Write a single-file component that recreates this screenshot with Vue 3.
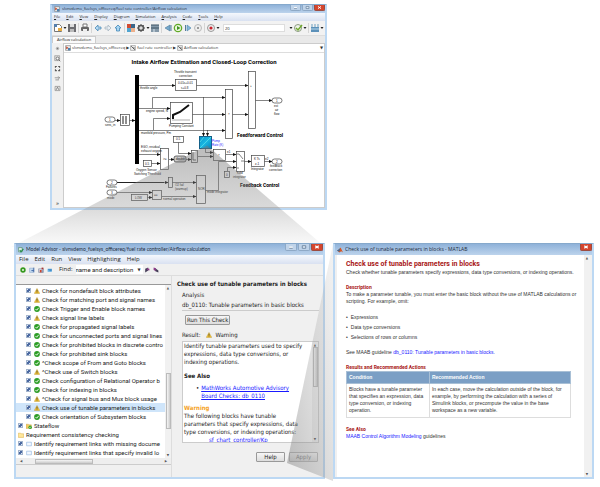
<script setup>
import { ref } from 'vue'

const modelMenus = ['File', 'Edit', 'View', 'Display', 'Diagram', 'Simulation', 'Analysis', 'Code', 'Tools', 'Help']
const modelTools = ['new', 'caret', 'save', 'sep', 'print', 'sep', 'back', 'forward', 'up', 'sep', 'library', 'gear', 'caret', 'explorer', 'sep', 'stepback', 'run', 'stepfwd', 'stop', 'sep', 'record', 'caret']
const sideTools = ['dot', 'lens', 'fit', 'route', 'note']
const crumbs = ['slvnvdemo_fuelsys_officereq', 'fuel rate controller', 'Airflow calculation']
const stopTime = ref('20')

const advisorMenus = ['File', 'Edit', 'Run', 'View', 'Highlighting', 'Help']
const advisorTools = ['ring', 'report', 'reportred', 'bluedoc']
const checks = [
  ['warn', 'Check for nondefault block attributes'],
  ['warn', 'Check for matching port and signal names'],
  ['pass', 'Check Trigger and Enable block names'],
  ['warn', 'Check signal line labels'],
  ['pass', 'Check for propagated signal labels'],
  ['pass', 'Check for unconnected ports and signal lines'],
  ['pass', 'Check for prohibited blocks in discrete contro'],
  ['pass', 'Check for prohibited sink blocks'],
  ['pass', '^Check scope of From and Goto blocks'],
  ['warn', '^Check use of Switch blocks'],
  ['pass', 'Check configuration of Relational Operator b'],
  ['pass', 'Check for indexing in blocks'],
  ['warn', '^Check for signal bus and Mux block usage'],
  ['warn', 'Check use of tunable parameters in blocks'],
  ['pass', 'Check orientation of Subsystem blocks'],
].map(([icon, text]) => ({ icon, text, level: 2, box: true }))
const tree = ref([
  ...checks,
  { icon: 'flow', text: 'Stateflow', level: 1, box: true },
  { icon: 'folder', text: 'Requirement consistency checking', level: 1, box: false },
  { icon: 'page', text: 'Identify requirement links with missing docume', level: 1, box: true },
  { icon: 'page', text: 'Identify requirement links that specify invalid lo', level: 1, box: true },
].map((row) => ({ ...row, checked: row.box })))
const selected = 13

const wires = [
  'M138 85.500H174', 'M195 85.500H247', 'M138 108.500H169', 'M151.500 108V97.500H224', 'M191 114.500H224',
  'M138 130.500H224', 'M152.500 130V118.500H169', 'M231 114.500H247', 'M254 100.500H271', 'M202.500 97V136',
  'M206.500 130V136', 'M114 120.500H119', 'M128 120.500H134', 'M138 154.500H159', 'M150 163.500H159',
  'M168 159.500H173', 'M177.500 142V153.500H190', 'M185 159.500H190', 'M197 156.500H212', 'M204.500 148V152.500H212',
  'M225 154.500H235', 'M243 161.500H250', 'M263 161.500H271', 'M226.500 171V167.500H235', 'M204 190.500H217.500V161.500H235',
  'M115 182.500H167', 'M171 182.500H195', 'M115 192.500H151', 'M146 197.500H151', 'M161 196.500H195',
]
const blocks = [
  [174, 79, 21, 11], [247, 71, 7, 57], [224, 89, 7, 49], [169, 102, 22, 21], [119, 114, 9, 11],
  [159, 148, 8, 21], [142, 160, 8, 6], [172, 136, 10, 6], [190, 150, 6, 12],
  [212, 149, 12, 11], [235, 151, 8, 20], [250, 155, 13, 11], [223, 171, 5, 6], [195, 175, 9, 28],
  [167, 177, 4, 10], [130, 194, 16, 6], [151, 190, 9, 9],
]
const ports = [[271, 98], [104, 117], [271, 159], [106, 180], [106, 190]]
const labels = [
  [139, 89, 'throttle angle'], [145, 112, 'engine speed, N'], [140, 134, 'manifold pressure, Pm'],
  [173, 73, 'Throttle transient'], [178, 77, 'correction'], [177, 84, '0.01s+0.01'], [180, 89, 's+0.8'],
  [168, 127, 'Pumping Constant'], [104, 126, 'sens_in'], [140, 148, 'EGO, residual'], [140, 152, 'exhaust oxygen'],
  [144, 165, '0.5'], [175, 140, '0.5'], [135, 171, 'Oxygen Sensor'], [133, 175, 'Switching Threshold'],
  [273, 107, 'est'], [274, 111, 'air'], [273, 115, 'flow'], [253, 160, 'K Ts'], [254, 165, 'z-1'],
  [250, 170, 'Integrator'], [269, 167, 'feedback'], [268, 171, 'correction'], [236, 174, 'hold'], [232, 178, 'integrator'],
  [197, 190, 'NOR'], [206, 193, 'mode integrator'], [225, 176, '0'], [105, 188, 'Failures'], [106, 199, 'mode'],
  [174, 186, 'O2 fail'], [174, 190, '(warmup)'], [134, 199, 'LOW'], [162, 200, 'normal operation'], [153, 196, '=='],
  [227, 115, '×'], [249, 87, '+'], [217, 156, '×'], [226, 153, 'e1'], [264, 160, 'e2'], [162, 160, '>='],
]
</script>

<template>
  <main class="stage">
    <svg class="sprites" aria-hidden="true">
      <symbol id="new" viewBox="0 0 10 10"><path d="M1.500 1.500h5l2 2v5h-7z" fill="#fff" stroke="#777" /><path d="M5 5h4v3H5z" fill="#e8ac42" /><path d="M1 1h3v3H1z" fill="#547fae" /></symbol>
      <symbol id="caret" viewBox="0 0 4 10"><path d="M.500 4h3L2 6z" fill="#222" /></symbol>
      <symbol id="save" viewBox="0 0 10 10"><path d="M1 1h8v8H1z" fill="#6c6c70" /><path d="M3 1h4v3H3z" fill="#ddd" /><path d="M3 6h4v3H3z" fill="#bbb" /></symbol>
      <symbol id="print" viewBox="0 0 10 10"><path d="M3 1h4v3H3z" fill="#fff" stroke="#777" /><rect x="1" y="4" width="8" height="4" rx="1" fill="#666" /><path d="M3 6h4v3H3z" fill="#eee" /></symbol>
      <symbol id="back" viewBox="0 0 10 10"><path d="M2 5l3-3v2h3v2H5v2z" fill="#b5d9f2" stroke="#4c8bb8" stroke-width=".8" /></symbol>
      <symbol id="forward" viewBox="0 0 10 10"><path d="M8 5L5 2v2H2v2h3v2z" fill="#e8edf2" stroke="#a7b6c2" stroke-width=".8" /></symbol>
      <symbol id="up" viewBox="0 0 10 10"><path d="M5 2l3 3H6.500v3h-3V5H2z" fill="#a9d5f2" stroke="#4288b8" stroke-width=".8" /></symbol>
      <symbol id="library" viewBox="0 0 10 10"><path d="M1 1h4v4H1z" fill="#d34b30" /><path d="M5 1h4v4H5z" fill="#3a678b" /><path d="M1 5h4v4H1z" fill="#50a4d0" /><path d="M5 5h4v4H5z" fill="#eeb08b" /></symbol>
      <symbol id="gear" viewBox="0 0 10 10"><circle cx="5" cy="5" r="2.500" fill="#ddd" stroke="#555" stroke-width="1.500" /><path d="M5 1v2m0 4v2M1 5h2m4 0h2M2.200 2.200l1.300 1.300m3 3l1.300 1.300m0-5.600L6.500 3.500m-3 3L2.200 7.800" stroke="#555" /></symbol>
      <symbol id="explorer" viewBox="0 0 10 10"><path d="M1 2h8v7H1z" fill="#8498a8" /><path d="M1 2h8M1 5h8" stroke="#3d5263" /><path d="M4 6v3" stroke="#dce8ef" /></symbol>
      <symbol id="stepback" viewBox="0 0 10 10"><path d="M7 2v6L2 5z" fill="#75a8cc" stroke="#4b7899" stroke-width=".6" /><path d="M8 2v6" stroke="#557b99" /></symbol>
      <symbol id="run" viewBox="0 0 10 10"><circle cx="5" cy="5" r="3.700" fill="#eaf7dc" stroke="#62a927" stroke-width="1.200" /><path d="M4 3l3.500 2L4 7z" fill="#3e9321" /></symbol>
      <symbol id="stepfwd" viewBox="0 0 10 10"><path d="M4 2v6l4-3z" fill="#83b7dc" stroke="#4e83aa" stroke-width=".6" /><path d="M2.500 2v6" stroke="#557b99" /></symbol>
      <symbol id="stop" viewBox="0 0 10 10"><circle cx="5" cy="5" r="3.500" fill="#eee" stroke="#bbb" /><path d="M4 4h2v2H4z" fill="#999" /></symbol>
      <symbol id="record" viewBox="0 0 10 10"><circle cx="5" cy="5" r="3.500" fill="#eee" stroke="#999" /><circle cx="5" cy="5" r="1.600" fill="#c8202b" /></symbol>
      <symbol id="ok" viewBox="0 0 10 10"><circle cx="5" cy="5" r="3.500" fill="#eff4e9" stroke="#8b9a80" /><path d="M3 5l2 2 4-5" fill="none" stroke="#70a92e" stroke-width="1.500" /></symbol>
      <symbol id="build" viewBox="0 0 10 10"><path d="M1 4h8v5H1z" fill="#5c91b9" /><path d="M2 1v3m3-3v3m3-3v3" stroke="#6c9fbe" /><path d="M1 6h8" stroke="#b9d8ea" /></symbol>
      <symbol id="dot" viewBox="0 0 10 10"><circle cx="5" cy="5" r="2.500" fill="#bbb" /><circle cx="5" cy="5" r="1" fill="#777" /></symbol>
      <symbol id="lens" viewBox="0 0 10 10"><path d="M1 1h7v7H1z" fill="#ddd" stroke="#999" /><circle cx="5" cy="5" r="2" fill="#fff" stroke="#555" /><path d="M7 7l2 2" stroke="#555" /></symbol>
      <symbol id="fit" viewBox="0 0 10 10"><path d="M2 4V2h2m2 0h2v2m0 2v2H6M4 8H2V6" fill="none" stroke="#555" stroke-width="1.500" /></symbol>
      <symbol id="route" viewBox="0 0 10 10"><path d="M1 4h7M6 2l2 2-2 2M2 7h5" fill="none" stroke="#777" /></symbol>
      <symbol id="note" viewBox="0 0 10 10"><path d="M1.500 2h7v6h-7z" fill="#eee" stroke="#888" /><path d="M3 7l2-4 2 4" fill="none" stroke="#666" /></symbol>
      <symbol id="model" viewBox="0 0 10 10"><path d="M1 1h8v8H1z" fill="#eee" stroke="#777" /><path d="M2 2l4 3-4 2z" fill="#bd4b33" /><path d="M5 5h4v4H5z" fill="#4f82ae" /></symbol>
      <symbol id="block" viewBox="0 0 10 10"><path d="M1 1h8v8H1z" fill="#eee" stroke="#888" /><path d="M2 2l6 6M5 5h3" stroke="#555" stroke-width="1.500" /></symbol>
      <symbol id="matlab" viewBox="0 0 10 10"><path d="M0 6l3-2 3-3 4 8-3-2-3 2z" fill="#d55624" /><path d="M0 6l3-2 2-2-1 6z" fill="#316b9b" /></symbol>
      <symbol id="advisor" viewBox="0 0 10 10"><path d="M1 1h6v7H1z" fill="#e4f1ea" stroke="#438358" /><path d="M3 5l2 3 4-5" fill="none" stroke="#238b45" stroke-width="2" /></symbol>
      <symbol id="ring" viewBox="0 0 10 10"><circle cx="5" cy="5" r="3" fill="#fff" stroke="#36991f" stroke-width="3" /></symbol>
      <symbol id="report" viewBox="0 0 10 10"><path d="M1 2h6v7H1z" fill="#c6dcf2" stroke="#8baacc" /><path d="M8 1v8M4 6h4" stroke="#355fa0" stroke-width="1.500" /></symbol>
      <symbol id="reportred" viewBox="0 0 10 10"><path d="M1 3h8v6H1z" fill="#d9dfec" stroke="#788297" /><path d="M3 5h3v4H3z" fill="#d3432b" /><path d="M6 1h3v3H6z" fill="#a33" /><path d="M7 5v4" stroke="#365783" /></symbol>
      <symbol id="bluedoc" viewBox="0 0 10 10"><path d="M1 3h7v5H1z" fill="#68b1e5" /><path d="M2 4h6M4 6h4" stroke="#2674b4" /></symbol>
      <symbol id="bin" viewBox="0 0 10 10"><path d="M2 3l5-2v5L2 9z" fill="#453e58" /><path d="M5 2l4 1v3L5 5z" fill="#8b3d87" /></symbol>
      <symbol id="binnext" viewBox="0 0 10 10"><path d="M1 1l4 1v5L1 5z" fill="#8b3d87" /><path d="M5 3l4 3v3L4 7z" fill="#453e58" /></symbol>
      <symbol id="warn" viewBox="0 0 10 10"><path d="M5 .800L9.500 9h-9z" fill="#fac832" stroke="#a98b31" stroke-width=".7" /><path d="M5 3v3.500M5 7.300v1" stroke="#333" stroke-width="1.200" /></symbol>
      <symbol id="pass" viewBox="0 0 10 10"><circle cx="5" cy="5" r="4.800" fill="#2e9e27" /><path d="M2.500 5l2 2L7.800 3" fill="none" stroke="#fff" stroke-width="1.500" /></symbol>
      <symbol id="flow" viewBox="0 0 10 10"><path d="M0 2h4l1 1h4v6H0z" fill="#f3ca62" stroke="#b99540" stroke-width=".6" /><circle cx="7" cy="7" r="3" fill="#35a42d" /><path d="M5.500 7l1 1 2-2" fill="none" stroke="#fff" /></symbol>
      <symbol id="folder" viewBox="0 0 10 10"><path d="M.500 2h4l1 1h4v6h-9z" fill="#ffe79a" stroke="#d4a840" stroke-width=".8" /></symbol>
      <symbol id="page" viewBox="0 0 10 10"><path d="M1 2h8v6H1z" fill="#f3f8ff" stroke="#8cb2de" /></symbol>
      <symbol id="wmin" viewBox="0 0 10 7"><path d="M3 4h4" stroke="#fff" stroke-width="2" /><path d="M3 5h4" stroke="#68819c" /></symbol>
      <symbol id="wmax" viewBox="0 0 10 7"><path d="M3 2h4v3H3z" fill="#dce8f5" stroke="#68819c" /></symbol>
      <symbol id="wclose" viewBox="0 0 10 7"><path d="M3 2l4 3m0-3L3 5" stroke="#fff" stroke-width="1.400" /></symbol>
    </svg>

    <div class="top-row">
      <section class="window model" aria-label="Model editor">
        <header class="titlebar">
          <svg class="ico"><use href="#model" /></svg>
          <span class="title">slvnvdemo_fuelsys_officereq/fuel rate controller/Airflow calculation</span>
          <span class="controls">
            <button aria-label="Minimize"><svg><use href="#wmin" /></svg></button>
            <button aria-label="Maximize"><svg><use href="#wmax" /></svg></button>
            <button class="close" aria-label="Close"><svg><use href="#wclose" /></svg></button>
          </span>
        </header>
        <nav class="menubar">
          <button v-for="m in modelMenus" :key="m"><u>{{ m[0] }}</u>{{ m.slice(1) }}</button>
        </nav>
        <div class="toolbar">
          <template v-for="(t, i) in modelTools" :key="i">
            <i v-if="t === 'sep'" class="sep"></i>
            <button v-else :class="{ narrow: t === 'caret' }" :aria-label="t"><svg><use :href="'#' + t" /></svg></button>
          </template>
          <input v-model="stopTime" class="stop-time" aria-label="Stop time">
          <button class="narrow" aria-label="modes"><svg><use href="#caret" /></svg></button>
          <button aria-label="check"><svg><use href="#ok" /></svg></button>
          <button class="narrow" aria-label="check options"><svg><use href="#caret" /></svg></button>
          <i class="sep"></i>
          <button aria-label="build"><svg><use href="#build" /></svg></button>
          <button class="narrow" aria-label="build options"><svg><use href="#caret" /></svg></button>
        </div>
        <div class="tabs"><button class="tab">Airflow calculation</button></div>
        <div class="editor">
          <aside class="side">
            <button v-for="s in sideTools" :key="s" :aria-label="s"><svg><use :href="'#' + s" /></svg></button>
            <span class="more">»</span>
          </aside>
          <div class="sheet">
            <nav class="crumbs">
              <template v-for="(c, i) in crumbs" :key="c">
                <svg class="ico"><use :href="i ? '#block' : '#model'" /></svg>
                <a href="#">{{ c }}</a><b v-if="i < 2">▶</b>
              </template>
              <b class="drop">▼</b>
            </nav>
            <svg class="diagram" viewBox="63 53 260 154" role="img" aria-label="Intake airflow block diagram">
              <defs>
                <marker id="tip" markerWidth="4" markerHeight="4" refX="3.500" refY="2" orient="auto" markerUnits="userSpaceOnUse"><path d="M0 .300L4 2 0 3.700z" fill="#111" /></marker>
                <linearGradient id="cyan" x2="1" y2="1"><stop offset="0" stop-color="#0b93c9" /><stop offset=".5" stop-color="#18b8e4" /><stop offset="1" stop-color="#087fb7" /></linearGradient>
              </defs>
              <path v-for="w in wires" :key="w" :d="w" class="wire" marker-end="url(#tip)" />
              <path d="M115 182.500H163" stroke="#222" stroke-width="1.200" />
              <rect v-for="(b, i) in blocks" :key="i" :x="b[0] + 0.5" :y="b[1] + 0.5" :width="b[2]" :height="b[3]" class="block" />
              <rect v-for="(p, i) in ports" :key="'p' + i" :x="p[0]" :y="p[1]" width="10" height="5" rx="2.500" class="block" />
              <text v-for="(p, i) in ports" :key="'n' + i" :x="p[0] + 4" :y="p[1] + 4" class="lbl">{{ [1, 1, 2, 2, 3][i] }}</text>
              <rect x="134" y="75" width="4" height="89" />
              <path d="M122 116v8m3-8v8" stroke="#444" stroke-width="1.200" />
              <rect x="173" y="156" width="12" height="6" rx="2" fill="#ccc" stroke="#333" stroke-width=".7" />
              <text x="175" y="160" class="lbl">double</text>
              <path d="M172 119v-4l7-3 9-7" fill="none" stroke="#111" stroke-width="2" />
              <path d="M171 120h18" stroke="#777" stroke-width=".6" />
              <path d="M236 154h2l4 5M236 168h2M240 161h3" fill="none" stroke="#333" stroke-width=".6" />
              <path d="M192 152v8h3" fill="none" stroke="#444" stroke-width=".8" />
              <rect x="198.500" y="136.500" width="12" height="12" fill="url(#cyan)" stroke="#135f88" />
              <path d="M199 148l11-11M203 137l-4 5" stroke="#55dce9" stroke-width=".8" />
              <text v-for="(l, i) in labels" :key="'l' + i" :x="l[0]" :y="l[1]" class="lbl">{{ l[2] }}</text>
              <text x="211" y="142" class="lbl blue">Pump</text>
              <text x="211" y="146" class="lbl blue">Rate (K)</text>
              <text x="203" y="64" class="heading">Intake Airflow Estimation and Closed-Loop Correction</text>
              <text x="236" y="137" class="caption">Feedforward Control</text>
              <text x="239" y="187" class="caption">Feedback Control</text>
            </svg>
          </div>
        </div>
      </section>
    </div>

    <svg class="cone cone-top" viewBox="0 0 600 487" preserveAspectRatio="none" aria-hidden="true">
      <defs><linearGradient id="fade1" x1="0" y1="0" x2="0" y2="1"><stop offset="0" stop-color="#777" stop-opacity=".5" /><stop offset=".6" stop-color="#888" stop-opacity=".32" /><stop offset="1" stop-color="#999" stop-opacity=".04" /></linearGradient></defs>
      <path d="M207 145L325 246H11z" fill="url(#fade1)" />
    </svg>

    <div class="bottom-row">
      <section class="window advisor" aria-label="Model Advisor">
        <header class="titlebar">
          <svg class="ico"><use href="#advisor" /></svg>
          <span class="title">Model Advisor - slvnvdemo_fuelsys_officereq/fuel rate controller/Airflow calculation</span>
          <span class="controls">
            <button aria-label="Minimize"><svg><use href="#wmin" /></svg></button>
            <button aria-label="Maximize"><svg><use href="#wmax" /></svg></button>
            <button class="close" aria-label="Close"><svg><use href="#wclose" /></svg></button>
          </span>
        </header>
        <nav class="menubar"><button v-for="m in advisorMenus" :key="m">{{ m }}</button></nav>
        <div class="toolbar">
          <button v-for="t in advisorTools" :key="t" :aria-label="t"><svg><use :href="'#' + t" /></svg></button>
          <label for="find">Find:</label>
          <span class="find"><select id="find"><option>name and description</option></select><b>▼</b></span>
          <button aria-label="find previous"><svg><use href="#bin" /></svg></button>
          <button aria-label="find next"><svg><use href="#binnext" /></svg></button>
        </div>
        <div class="panes">
          <div class="left-pane">
            <div class="tree-box">
              <ul class="tree">
                <li v-for="(row, i) in tree" :key="i" :class="['level' + row.level, { selected: i === selected }]">
                  <label>
                    <input v-if="row.box" v-model="row.checked" type="checkbox">
                    <svg><use :href="'#' + row.icon" /></svg>
                    <span>{{ row.text }}</span>
                  </label>
                </li>
              </ul>
              <div class="vbar"><b>▲</b><i></i><b>▼</b></div>
            </div>
            <div class="hbar"><b>◀</b><i></i><b>▶</b></div>
          </div>
          <div class="right-pane">
            <h2>Check use of tunable parameters in blocks</h2>
            <div class="group">
              <h3>Analysis</h3>
              <p class="ident">db_0110: Tunable parameters in basic blocks</p>
              <button class="push run">Run This Check</button>
              <p class="result">Result: <svg><use href="#warn" /></svg> Warning</p>
              <div class="report">
                <div class="report-text">
                  <p>Identify tunable parameters used to specify expressions, data type conversions, or indexing operations.</p>
                  <h4>See Also</h4>
                  <ul><li><a href="#">MathWorks Automotive Advisory Board Checks: db_0110</a></li></ul>
                  <h4 class="orange">Warning</h4>
                  <p>The following blocks have tunable parameters that specify expressions, data type conversions, or indexing operations:</p>
                  <p class="cut"><a href="#">sf_chart_controller/Kp</a></p>
                </div>
                <div class="vbar"><b>▲</b><i></i><b>▼</b></div>
              </div>
            </div>
            <div class="actions"><button class="push">Help</button><button class="push" disabled>Apply</button></div>
          </div>
        </div>
      </section>

      <section class="window help" aria-label="Check help">
        <header class="titlebar">
          <svg class="ico"><use href="#matlab" /></svg>
          <span class="title">Check use of tunable parameters in blocks - MATLAB</span>
          <span class="controls"><button class="close" aria-label="Close"><svg><use href="#wclose" /></svg></button></span>
        </header>
        <div class="doc-box">
          <article class="doc">
            <h1>Check use of tunable parameters in blocks</h1>
            <p>Check whether tunable parameters specify expressions, data type conversions, or indexing operations.</p>
            <h2>Description</h2>
            <p>To make a parameter tunable, you must enter the basic block without the use of MATLAB calculations or scripting. For example, omit:</p>
            <ul><li>Expressions</li><li>Data type conversions</li><li>Selections of rows or columns</li></ul>
            <p>See MAAB guideline <a href="#">db_0110: Tunable parameters in basic blocks.</a></p>
            <h2>Results and Recommended Actions</h2>
            <table>
              <thead><tr><th>Condition</th><th>Recommended Action</th></tr></thead>
              <tbody><tr>
                <td>Blocks have a tunable parameter that specifies an expression, data type conversion, or indexing operation.</td>
                <td>In each case, move the calculation outside of the block, for example, by performing the calculation with a series of Simulink blocks, or precompute the value in the base workspace as a new variable.</td>
              </tr></tbody>
            </table>
            <h2>See Also</h2>
            <p><a href="#">MAAB Control Algorithm Modeling</a> guidelines</p>
          </article>
          <div class="vbar plain"><b>▲</b><b>▼</b></div>
        </div>
      </section>
    </div>

    <svg class="cone cone-side" viewBox="0 0 600 487" preserveAspectRatio="none" aria-hidden="true">
      <defs><linearGradient id="fade2" x1="0" y1="1" x2="1" y2="0"><stop offset="0" stop-color="#777" stop-opacity=".45" /><stop offset="1" stop-color="#aaa" stop-opacity=".15" /></linearGradient></defs>
      <path d="M287 461L333 243V479z" fill="url(#fade2)" />
    </svg>
  </main>
</template>

<style>
body { background: #fff; }
</style>

<style scoped>
* { box-sizing: border-box; }
h1, h2, h3, h4, p, ul { margin: 0; padding: 0; font-weight: normal; font-size: inherit; }
ul { list-style: none; }
button { margin: 0; padding: 0; border: 0; background: none; color: inherit; font: inherit; white-space: nowrap; }
a { color: #1a1aff; text-decoration: none; }
svg { display: block; flex: none; }
b { font: 4px/4px "DejaVu Sans", sans-serif; color: #333; }
.sprites { position: absolute; width: 0; height: 0; }
.stage { position: relative; padding: 4px 6px 10px 14px; font: 4px/6px "Open Sans", "Noto Sans", sans-serif; color: #222; }
.top-row { display: grid; grid-template-columns: 277fr 267fr; padding-left: 36px; margin-bottom: 33px; }
.bottom-row { position: relative; display: grid; grid-template-columns: 311fr 261fr; gap: 8px; }
.cone { position: absolute; inset: 0; width: 100%; height: 100%; pointer-events: none; }

.window { display: flex; flex-direction: column; min-width: 0; border: 2px solid #bcd8f3; border-top: 1px solid #86a9cc; background: #f0f0f0; }
.titlebar { display: flex; flex: none; align-items: center; gap: 2px; height: 8px; padding-left: 2px; background: linear-gradient(#8fb2d9, #bcd3ec); }
.title { flex: 1; min-width: 0; overflow: hidden; white-space: nowrap; color: #1d2b3d; }
.ico { width: 6px; height: 6px; }
.controls { display: flex; gap: 1px; align-self: flex-start; }
.controls button { width: 11px; height: 6px; border: 1px solid #8ea9c6; border-top: 0; border-radius: 0 0 2px 2px; background: #bfd3e9; }
.controls svg { width: 100%; height: 100%; }
.controls .close { background: #d5452d; border-color: #9d4c40; }
.menubar { display: flex; align-items: center; height: 8px; background: linear-gradient(#f5f8fd, #d9e1f1); }
.toolbar { display: flex; align-items: center; }
.toolbar button, .toolbar button svg { width: 10px; height: 10px; }
.toolbar .narrow, .toolbar .narrow svg { width: 4px; }

.model .menubar { gap: 6px; padding-left: 2px; }
.model .toolbar { height: 15px; padding: 0 1px; background: #f2f2f2; border-bottom: 1px solid #ddd; }
.sep { width: 1px; height: 10px; margin: 0 1px; background: #d5d5d5; }
.stop-time { flex: 1; min-width: 0; height: 8px; margin: 0 4px 0 3px; padding: 0 1px; border: 1px solid #ddd; background: #fff; font: 4px/6px "Open Sans", sans-serif; color: #222; }
.tabs { height: 7px; background: #e9e9e9; }
.tab { display: block; height: 7px; padding: 0 4px; border: 1px solid #ccc; border-bottom: 0; background: #fafafa; line-height: 6px; }
.editor { display: flex; flex: 1; }
.side { display: flex; flex-direction: column; align-items: center; gap: 3px; width: 11px; padding: 2px 0; }
.side button, .side button svg { width: 7px; height: 7px; }
.side .more { margin-top: auto; font-size: 6px; line-height: 6px; }
.sheet { flex: 1; min-width: 0; border: 1px solid #ccc; background: #fff; }
.crumbs { display: flex; align-items: center; gap: 1px; height: 9px; padding: 0 1px; border-bottom: 1px solid #ddd; white-space: nowrap; }
.crumbs a { color: #333; }
.crumbs .drop { margin-left: auto; }
.diagram { width: 100%; height: auto; }
.wire { fill: none; stroke: #333; stroke-width: 0.6; }
.block { fill: #fff; stroke: #444; stroke-width: 0.7; }
.lbl { font: 3px "Liberation Sans", sans-serif; fill: #111; }
.blue { fill: #22f; }
.heading { font: bold 6px Roboto, sans-serif; text-anchor: middle; }
.caption { font: bold 5px Roboto, sans-serif; }

.advisor { font-size: 6px; line-height: 9px; }
.advisor .title { font: 5px/9px Lato, sans-serif; }
.advisor .titlebar, .help .titlebar { height: 11px; }
.advisor .controls button, .help .controls button { width: 12px; height: 7px; }
.advisor .menubar { gap: 6px; height: 9px; padding-left: 3px; }
.advisor .toolbar { gap: 0; height: 12px; padding-left: 2px; border-bottom: 1px solid #ddd; }
.advisor .toolbar button { display: flex; align-items: center; justify-content: center; width: 9px; }
.advisor .toolbar button svg { width: 6px; height: 6px; }
.advisor .toolbar label { padding: 0 3px 0 5px; }
.find { display: flex; align-items: center; background: #fff; padding-right: 2px; }
select { appearance: none; width: 62px; height: 9px; margin: 0; padding: 0; border: 0; background: #fff; color: #222; font: 6px/9px Roboto, sans-serif; }
.panes { display: grid; grid-template-columns: minmax(0, 156fr) minmax(0, 151fr); flex: 1; min-height: 0; }
.left-pane { display: flex; flex-direction: column; min-width: 0; padding: 8px 0 12px; border-right: 1px solid #ddd; }
.tree-box { display: flex; flex: 1; border-top: 1px solid #999; background: #fff; min-width: 0; }
.tree { flex: 1; min-width: 0; padding: 1px 0; font-family: Roboto, "Open Sans", sans-serif; }
.tree li { height: 9px; white-space: nowrap; }
.tree label { display: flex; align-items: center; gap: 2px; height: 9px; }
.tree svg { width: 6px; height: 6px; }
.tree .level2 { padding-left: 10px; }
.tree .level1 { padding-left: 2px; }
.tree input { appearance: none; flex: none; width: 5px; height: 5px; margin: 0 1px 0 0; border: 1px solid #a3b4cc; background: #f4f8ff; }
.tree input:checked { background: linear-gradient(135deg, #dfe8f6 35%, #4a68a0 35%, #4a68a0 65%, #dfe8f6 65%) border-box; }
.tree .selected { background: #cfe5fa; }
.vbar { display: flex; flex-direction: column; align-items: center; justify-content: space-between; flex: none; width: 6px; padding: 1px 0; background: #f1f1f1; }
.vbar i { width: 5px; height: 56px; margin: auto 0 24px; border: 1px solid #bbb; background: linear-gradient(90deg, #f5f5f5, #ccc); }
.vbar b, .hbar b { font-size: 3px; color: #555; }
.hbar { display: flex; align-items: center; flex: none; height: 7px; padding: 0 4px; background: #eee; border-bottom: 1px solid #ccc; }
.hbar i { width: 58px; height: 5px; margin-left: 13px; margin-right: auto; border: 1px solid #bbb; background: linear-gradient(#f5f5f5, #ccc); }

.right-pane { display: flex; flex-direction: column; min-width: 0; padding: 2px 3px 15px 5px; font: 6px/8px "DejaVu Sans Condensed", "DejaVu Sans", sans-serif; }
.right-pane h2 { font-weight: bold; line-height: 11px; white-space: nowrap; }
.group { display: flex; flex-direction: column; padding: 0 1px 0 5px; }
.group h3 { line-height: 11px; }
.ident { line-height: 10px; border-bottom: 1px solid #ccc; white-space: nowrap; }
.push { border: 1px solid #999; border-radius: 1px; background: linear-gradient(#f6f6f6, #ddd); height: 10px; }
.run { align-self: flex-start; margin: 4px 0 5px 3px; padding: 0 1px; }
.result { display: flex; align-items: center; gap: 3px; line-height: 10px; margin-bottom: 1px; }
.result svg { width: 6px; height: 6px; margin-left: 3px; }
.report { display: flex; height: 102px; border: 1px solid #ccc; background: #fff; }
.report-text { flex: 1; min-width: 0; padding: 0 5px 0 1px; overflow: hidden; }
.report h4 { font-weight: bold; margin: 6px 0 4px; }
.report .orange { margin: 4px 0 0; color: #f5a11c; }
.report li { display: flex; gap: 2px; padding: 0 10px 0 12px; }
.report li::before { content: "•"; }
.report a { text-decoration: underline; }
.report .cut { padding-left: 25px; }
.report .vbar i { height: 40px; margin: 0 0 auto; }
.actions { display: flex; justify-content: flex-end; gap: 4px; margin-top: auto; padding-right: 2px; }
.actions .push { width: 29px; }
.actions .push:disabled { color: #888; border-color: #bbb; }

.help .title { font: 5px/9px "Open Sans", sans-serif; }
.doc-box { display: flex; flex: 1; margin: 0 2px; background: #fff; }
.doc { flex: 1; min-width: 0; padding: 4px 13px 30px 9px; font: 5px/7px "Liberation Sans", Arial, sans-serif; color: #333; }
.doc p { margin-right: -8px; }
.doc h1 { font: bold 7px/10px Roboto, sans-serif; color: #a81616; }
.doc h2 { font-family: Roboto, sans-serif; font-weight: bold; color: #a81616; margin-top: 8px; }
.doc ul { padding: 7px 0; }
.doc li { display: flex; gap: 3px; line-height: 10px; }
.doc li::before { content: "•"; }
table { width: 100%; border-collapse: collapse; table-layout: fixed; }
th { height: 12px; padding: 0 2px; border: 1px solid #a9c0d6; background: #7b9fc5; color: #fff; text-align: left; font-size: 5px; line-height: 7px; }
th:first-child { width: 37%; }
td { padding: 2px 0 3px 2px; border: 1px solid #ddd; vertical-align: top; line-height: 7px; }
</style>
